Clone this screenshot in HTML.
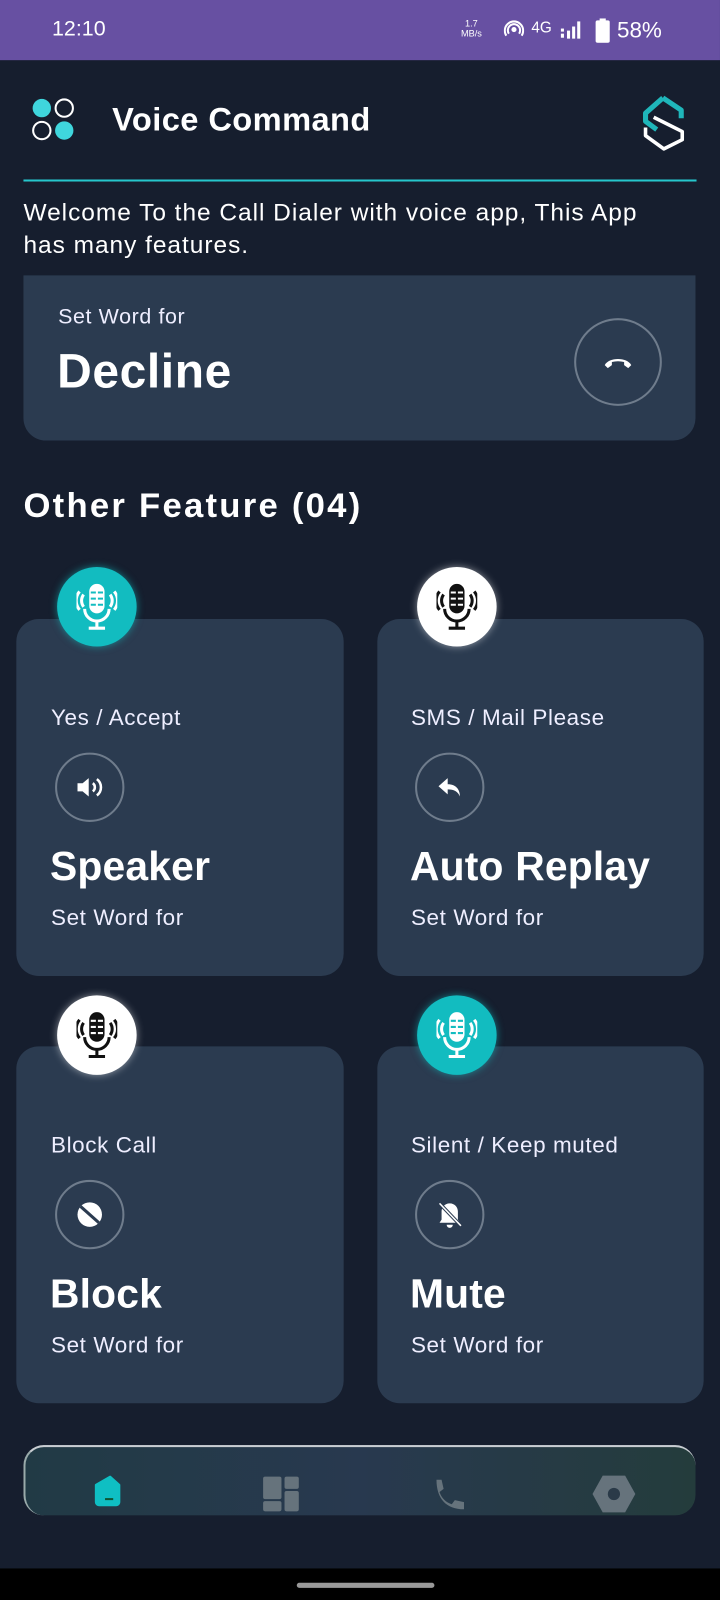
<!DOCTYPE html>
<html><head><meta charset="utf-8"><style>
*{margin:0;padding:0;box-sizing:border-box}
html,body{width:720px;height:1600px;overflow:hidden;background:#161e2e}
#w{width:706px;height:1569px;transform:scale(1.0198);transform-origin:0 0;position:relative;font-family:"Liberation Sans",sans-serif;color:#fff}
.abs{position:absolute}
.sb{top:0;left:0;width:706px;height:59px;background:#6750a2}
.card{position:absolute;background:#2b3b50;border-radius:22px}
.lbl{position:absolute;font-size:22px;color:#eef;white-space:nowrap;letter-spacing:0.6px}
.ttl{position:absolute;font-size:40px;font-weight:bold;white-space:nowrap;letter-spacing:0.2px}
.ic{position:absolute;width:68px;height:68px;border:2px solid #6f7c8c;border-radius:50%;display:flex;align-items:center;justify-content:center}
.mic{position:absolute;width:78px;height:78px;border-radius:50%;display:flex;align-items:center;justify-content:center}
.teal{background:#12bcc0;box-shadow:0 0 8px rgba(18,188,192,.6)}
.white{background:#fff;box-shadow:0 0 8px rgba(255,255,255,.5)}
</style></head><body><div id="w">
<div class="abs sb"></div>
<div class="abs" style="left:51px;top:17px;font-size:21px">12:10</div>
<div class="abs" style="left:452px;top:18px;font-size:9px;line-height:10px;text-align:center">1.7<br>MB/s</div>
<svg class="abs" style="left:494px;top:19px" width="20" height="20" viewBox="0 0 20 20"><circle cx="10" cy="10" r="2.5" fill="#fff"/><path d="M5 14a6 6 0 1 1 10 0M2.5 16a9 9 0 1 1 15 0" stroke="#fff" stroke-width="2" fill="none"/></svg>
<div class="abs" style="left:521px;top:19px;font-size:15px">4G</div>
<svg class="abs" style="left:549px;top:20px" width="22" height="18"><rect x="1" y="8" width="3" height="3" fill="#fff"/><rect x="1" y="13" width="3" height="4" fill="#fff"/><rect x="7" y="10" width="3" height="8" fill="#fff"/><rect x="12" y="6" width="3" height="12" fill="#fff"/><rect x="17" y="1" width="3" height="17" fill="#fff"/></svg>
<svg class="abs" style="left:584px;top:18px" width="14" height="24"><rect x="4" y="0" width="6" height="3" fill="#fff"/><rect x="0" y="2" width="14" height="22" rx="2" fill="#fff"/></svg>
<div class="abs" style="left:605px;top:17px;font-size:22px">58%</div>

<svg class="abs" style="left:31px;top:96px" width="45" height="45"><circle cx="10" cy="10" r="9" fill="#3fd6dd"/><circle cx="32" cy="10" r="8.5" fill="none" stroke="#fff" stroke-width="2"/><circle cx="10" cy="32" r="8.5" fill="none" stroke="#fff" stroke-width="2"/><circle cx="32" cy="32" r="9" fill="#3fd6dd"/></svg>
<div class="abs" style="left:110px;top:99px;font-size:32px;font-weight:bold;letter-spacing:0.4px">Voice Command</div>
<svg class="abs" style="left:626px;top:93px" width="50" height="56" viewBox="0 0 50 56"><path d="M24 3L7 18v8l11 8" stroke="#1fb6ba" stroke-width="5" fill="none" stroke-linejoin="round"/><path d="M24 3l18 12v8" stroke="#1fb6ba" stroke-width="5" fill="none" stroke-linejoin="round"/><path d="M15 22l28 14v8L25 53 7 40v-8" stroke="#fff" stroke-width="3.5" fill="none" stroke-linejoin="round"/></svg>
<div class="abs" style="left:23px;top:176px;width:660px;height:2px;background:#26c6cc"></div>
<div class="abs" style="left:23px;top:193px;font-size:24px;line-height:32px;width:700px;letter-spacing:0.95px">Welcome To the Call Dialer with voice app, This App<br>has many features.</div>

<div class="card" style="left:23px;top:270px;width:659px;height:162px;border-radius:0 0 22px 22px"></div>
<div class="lbl" style="left:57px;top:299px;font-size:21px">Set Word for</div>
<div class="abs" style="left:56px;top:336px;font-size:47px;font-weight:bold;letter-spacing:0.6px">Decline</div>
<div class="ic" style="left:563px;top:312px;width:86px;height:86px"><svg width="30" height="14" viewBox="0 0 30 14"><path d="M2 10c4-8 22-8 26 0l-3 3-4-3v-3c-4-1-8-1-12 0v3l-4 3z" fill="#fff"/></svg></div>

<div class="abs" style="left:23px;top:477px;font-size:34px;font-weight:bold;letter-spacing:2.2px">Other Feature (04)</div>

<div class="card" style="left:16px;top:607px;width:321px;height:350px"></div>
<div class="card" style="left:370px;top:607px;width:320px;height:350px"></div>
<div class="card" style="left:16px;top:1026px;width:321px;height:350px"></div>
<div class="card" style="left:370px;top:1026px;width:320px;height:350px"></div>

<svg width="0" height="0" style="position:absolute"><defs><g id="m"><rect x="13" y="2" width="14" height="28" rx="7"/><path d="M7 12a10 10 0 0 0 0 12M33 12a10 10 0 0 1 0 12M3 9a14 14 0 0 0 0 18M37 9a14 14 0 0 1 0 18M8 26a12 12 0 0 0 24 0M20 38v7M12 45h16" fill="none" stroke-width="3"/></g></defs></svg>
<div class="mic teal" style="left:56px;top:556px"><svg width="40" height="48" fill="#fff" stroke="#fff"><use href="#m"/><path d="M14 10h5M21 10h5M14 16h5M21 16h5M14 22h5M21 22h5" stroke="#12bcc0" stroke-width="2"/></svg></div>
<div class="mic white" style="left:409px;top:556px"><svg width="40" height="48" fill="#111" stroke="#111"><use href="#m"/><path d="M14 10h5M21 10h5M14 16h5M21 16h5M14 22h5M21 22h5" stroke="#fff" stroke-width="2"/></svg></div>
<div class="mic white" style="left:56px;top:976px"><svg width="40" height="48" fill="#111" stroke="#111"><use href="#m"/><path d="M14 10h5M21 10h5M14 16h5M21 16h5M14 22h5M21 22h5" stroke="#fff" stroke-width="2"/></svg></div>
<div class="mic teal" style="left:409px;top:976px"><svg width="40" height="48" fill="#fff" stroke="#fff"><use href="#m"/><path d="M14 10h5M21 10h5M14 16h5M21 16h5M14 22h5M21 22h5" stroke="#12bcc0" stroke-width="2"/></svg></div>

<div class="lbl" style="left:50px;top:691px">Yes / Accept</div>
<div class="lbl" style="left:403px;top:691px">SMS / Mail Please</div>
<div class="lbl" style="left:50px;top:1110px">Block Call</div>
<div class="lbl" style="left:403px;top:1110px">Silent / Keep muted</div>

<div class="ic" style="left:54px;top:738px"><svg width="30" height="24" viewBox="0 0 30 24"><path d="M3 8h5l6-5v18l-6-5H3z" fill="#fff"/><path d="M18 8a5 5 0 0 1 0 8M22 4a10 10 0 0 1 0 16" stroke="#fff" stroke-width="2.5" fill="none"/></svg></div>
<div class="ic" style="left:407px;top:738px"><svg width="24" height="22" viewBox="0 0 24 22"><path d="M10 2L1 10l9 8v-5c6 0 10 2 12 7 0-7-4-12-12-12z" fill="#fff"/></svg></div>
<div class="ic" style="left:54px;top:1157px"><svg width="26" height="26" viewBox="0 0 26 26"><circle cx="13" cy="13" r="12" fill="#fff"/><path d="M4 5l18 16" stroke="#2b3b50" stroke-width="3"/></svg></div>
<div class="ic" style="left:407px;top:1157px"><svg width="28" height="28" viewBox="0 0 28 28"><path d="M14 3c-5 0-8 4-8 8v8l-2 3h20l-2-3v-8c0-4-3-8-8-8z" fill="#fff"/><path d="M11 24h6a3 3 0 0 1-6 0z" fill="#fff"/><path d="M4 3l21 22" stroke="#2b3b50" stroke-width="3.5"/><path d="M4 3l21 22" stroke="#fff" stroke-width="1.5"/></svg></div>

<div class="ttl" style="left:49px;top:828px">Speaker</div>
<div class="ttl" style="left:402px;top:828px">Auto Replay</div>
<div class="ttl" style="left:49px;top:1247px">Block</div>
<div class="ttl" style="left:402px;top:1247px">Mute</div>
<div class="lbl" style="left:50px;top:887px">Set Word for</div>
<div class="lbl" style="left:403px;top:887px">Set Word for</div>
<div class="lbl" style="left:50px;top:1306px">Set Word for</div>
<div class="lbl" style="left:403px;top:1306px">Set Word for</div>

<div class="abs" style="left:23px;top:1417px;width:659px;height:69px;border-radius:20px;background:linear-gradient(90deg,#213a45,#28394f 50%,#243c3c);border-top:2px solid #c8cdd2;border-left:2px solid #9aa"></div>
<svg class="abs" style="left:87px;top:1446px" width="38" height="38" viewBox="0 0 38 38"><path d="M19 2l9 8v17a3 3 0 0 1-3 3H8a3 3 0 0 1-3-3V10z" transform="translate(2,0)" fill="#0fbfc3" stroke="#0fbfc3" stroke-linejoin="round" stroke-width="2"/><rect x="16" y="23" width="8" height="2" fill="#153"/></svg>
<svg class="abs" style="left:257px;top:1447px" width="38" height="38"><rect x="1" y="1" width="18" height="22" rx="2" fill="#66737c"/><rect x="1" y="25" width="18" height="10" rx="2" fill="#66737c"/><rect x="22" y="1" width="14" height="12" rx="2" fill="#66737c"/><rect x="22" y="15" width="14" height="20" rx="2" fill="#66737c"/></svg>
<svg class="abs" style="left:424px;top:1448px" width="34" height="36" viewBox="0 0 34 36"><path d="M4 3h5l2 9-4 3c2 6 6 10 12 12l3-4 9 2v7c-18 0-27-11-27-29z" fill="#66737c"/></svg>
<svg class="abs" style="left:580px;top:1446px" width="44" height="38" viewBox="0 0 44 38"><path d="M11 1h22l10 18-10 18H11L1 19z" fill="#66737c"/><circle cx="22" cy="19" r="6" fill="#2a3a48"/></svg>

<div class="abs" style="left:0;top:1538px;width:706px;height:62px;background:#000"></div>
<div class="abs" style="left:291px;top:1552px;width:135px;height:5px;border-radius:3px;background:#999"></div>
</div></body></html>
